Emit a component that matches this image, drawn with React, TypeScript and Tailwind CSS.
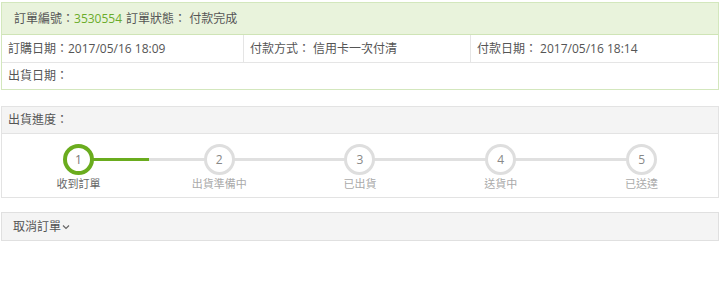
import React from "react";

const font = { fontFamily: '"Open Sans", "Noto Sans CJK TC", sans-serif' };

const steps = ["收到訂單", "出貨準備中", "已出貨", "送貨中", "已送達"];

export default function App() {
  return (
    <div className="w-[720px] h-[304px] bg-white px-px pt-[2px] text-[12px] text-[#555]" style={font}>
      <div className="border border-[#d3e7bd]">
        <div className="h-[32px] bg-[#e9f3dc] border-b border-[#cfe4b6] flex items-center pl-[12px]">
          <span>訂單編號：</span>
          <span className="text-[#6aac2b]">3530554</span>
          <span className="ml-[4px]">訂單狀態： 付款完成</span>
        </div>
        <div className="h-[28px] flex border-b border-[#e5e5e5]">
          <div className="w-[242px] border-r border-[#e5e5e5] flex items-center pl-[6px]">訂購日期：2017/05/16 18:09</div>
          <div className="w-[227px] border-r border-[#e5e5e5] flex items-center pl-[6px]">付款方式： 信用卡一次付清</div>
          <div className="flex-1 flex items-center pl-[6px]">付款日期： 2017/05/16 18:14</div>
        </div>
        <div className="h-[26px] flex items-center pl-[6px]">出貨日期：</div>
      </div>

      <div className="mt-[16px] border border-[#e3e3e3]">
        <div className="h-[27px] bg-[#f4f4f4] border-b border-[#e3e3e3] flex items-center pl-[6px]">出貨進度：</div>
        <div className="h-[63px] flex px-[6px] pt-[10px]">
          {steps.map((s, i) => (
            <div key={s} className="flex-1 relative flex flex-col items-center">
              {i < steps.length - 1 && (
                <div className="absolute top-[14px] left-1/2 w-full h-[3px] bg-[#e0e0e0]">
                  {i === 0 && <div className="h-full w-1/2 bg-[#6aac1e]" />}
                </div>
              )}
              <div
                className={
                  "relative z-10 w-[31px] h-[31px] rounded-full bg-white flex items-center justify-center text-[12px] " +
                  (i === 0 ? "border-[4px] border-[#6aac1e] text-[#777]" : "border-[3px] border-[#dedede] text-[#888]")
                }
              >
                {i + 1}
              </div>
              <div className={"mt-[1px] text-[11px] " + (i === 0 ? "text-[#666]" : "text-[#aaa]")}>{s}</div>
            </div>
          ))}
        </div>
      </div>

      <div className="mt-[14px] h-[29px] border border-[#e0e0e0] bg-[#f4f4f4] flex items-center pl-[11px]">
        <span>取消訂單</span>
        <svg width="8" height="6" viewBox="0 0 8 6" className="ml-[1px] mt-[1px]">
          <path d="M1 1.5 L4 4.5 L7 1.5" fill="none" stroke="#666" strokeWidth="1.2" />
        </svg>
      </div>
    </div>
  );
}
